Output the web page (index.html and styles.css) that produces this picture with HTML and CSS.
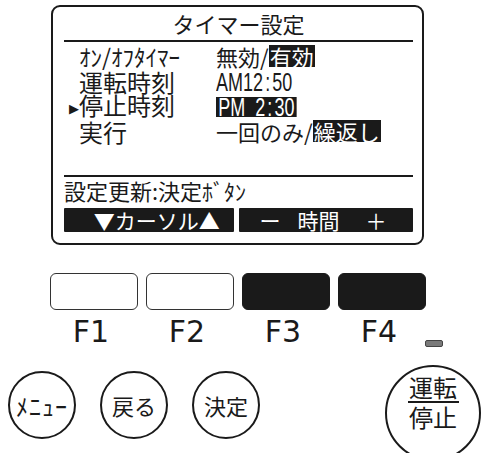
FILE: index.html
```html
<!DOCTYPE html>
<html lang="ja">
<head>
    <meta charset="UTF-8">
    <title>タイマー設定</title>
    <link rel="stylesheet" href="styles.css">
</head>
<body>

    <!-- LCD screen -->
    <div class="screen">
        <div class="title">タイマー設定</div>
        <div class="rows">
            <div class="label kana">ｵﾝ/ｵﾌﾀｲﾏｰ</div>
            <div class="value">無効/<span class="inv">有効</span></div>

            <div class="label">運転時刻</div>
            <div class="value"><span class="num">AM12<span class="colon">:</span>50</span></div>

            <div class="label"><span class="cursor">▶</span>停止時刻</div>
            <div class="value"><span class="num inv">PM&nbsp;&nbsp;2<span class="colon">:</span>30</span></div>

            <div class="label">実行</div>
            <div class="value">一回のみ/<span class="inv">繰返し</span></div>
        </div>
        <div class="hint">設定更新:決定ﾎﾞﾀﾝ</div>
        <div class="softkeys">
            <div class="softkey cursor-key">▼カーソル▲</div>
            <div class="softkey split">
                <span>ー</span>
                <span class="mid">時間</span>
                <span>＋</span>
            </div>
        </div>
    </div>

    <!-- function keys -->
    <div class="fkeys">
        <div class="fkey"></div>
        <div class="fkey"></div>
        <div class="fkey dark"></div>
        <div class="fkey dark"></div>
    </div>
    <div class="flabels">
        <div class="flabel">F1</div>
        <div class="flabel">F2</div>
        <div class="flabel">F3</div>
        <div class="flabel">F4</div>
        <div class="led"></div>
    </div>

    <!-- round buttons -->
    <div class="controls">
        <div class="round kana">ﾒﾆｭｰ</div>
        <div class="round">戻る</div>
        <div class="round">決定</div>
        <div class="power">
            <span>運転</span>
            <span class="bar"></span>
            <span>停止</span>
        </div>
    </div>

</body>
</html>
```

FILE: styles.css
```css
body {
    margin: 0;
    width: 482px;
    height: 453px;
    overflow: hidden;
    background: #fff;
    color: #1a1a1a;
    font-family: "Noto Sans CJK JP", sans-serif;
}

/* LCD screen */
.screen {
    box-sizing: border-box;
    width: 373px;
    height: 240px;
    margin: 5px 0 0 51px;
    padding: 0 9px 11px 11px;
    border: 2px solid #1a1a1a;
    border-radius: 9px;
    display: flex;
    flex-direction: column;
}

.title {
    height: 33px;
    line-height: 33px;
    font-size: 22px;
    text-align: center;
    border-bottom: 2.5px solid #1a1a1a;
}

.rows {
    display: grid;
    grid-template-columns: 137px 1fr;
    grid-auto-rows: 25px;
    align-items: center;
    margin-top: 1.5px;
    padding-left: 15px;
    line-height: 25px;
}

.label,
.value {
    white-space: nowrap;
}

.label {
    font-size: 24px;
}

.value {
    font-size: 22px;
}

.label.kana {
    font-size: 23px;
}

.cursor {
    display: inline-block;
    width: 10px;
    margin-left: -10px;
    font-family: "DejaVu Sans", sans-serif;
    font-size: 13px;
    vertical-align: 2px;
}

.inv {
    display: inline-block;
    background: #1a1a1a;
    color: #fff;
    line-height: 22px;
    padding: 0 1px;
}

/* condensed digits of the LCD */
.num {
    display: inline-block;
    font-family: "Liberation Sans", sans-serif;
    font-size: 25px;
    line-height: 20px;
    transform: scaleX(0.72);
    transform-origin: left center;
}

.num.inv {
    padding: 0 3px;
}

.colon {
    margin: 0 3px;
}

.hint {
    margin-top: auto;
    margin-bottom: 5px;
    border-top: 2px solid #1a1a1a;
    font-size: 22px;
    line-height: 26px;
    white-space: nowrap;
}

.softkeys {
    display: flex;
    gap: 5px;
    height: 24px;
}

.softkey {
    flex: 1;
    background: #1a1a1a;
    color: #fff;
    font-size: 21px;
    line-height: 24px;
    text-align: center;
    border-radius: 1px;
}

.softkey.cursor-key {
    padding-left: 16px;
}

.softkey.split {
    display: flex;
    padding-left: 21px;
}

.softkey .mid {
    margin: 0 26px 0 17px;
}

/* function keys */
.fkeys {
    display: flex;
    gap: 8px;
    margin: 28px 0 0 50px;
}

.fkey {
    box-sizing: border-box;
    width: 88px;
    height: 37px;
    border: 1.5px solid #333;
    border-radius: 6px;
}

.fkey.dark {
    background: #1a1a1a;
    border-color: #1a1a1a;
}

.flabels {
    display: flex;
    margin: 4px 0 0 51px;
    height: 36px;
}

.flabel {
    width: 80px;
    margin-right: 16px;
    text-align: center;
    font-family: "DejaVu Sans", sans-serif;
    font-size: 30px;
    line-height: 36px;
}

.flabel:nth-child(4) {
    margin-right: 6px;
}

.led {
    box-sizing: border-box;
    width: 18px;
    height: 7px;
    margin-top: 26px;
    background: #7a7a7a;
    border: 1px solid #444;
    border-radius: 2px;
}

/* round buttons */
.controls {
    display: flex;
    align-items: flex-start;
    gap: 24px;
    margin-top: 15px;
    padding-left: 8px;
}

.round {
    box-sizing: border-box;
    width: 68px;
    height: 68px;
    margin-top: 6px;
    border: 2px solid #1a1a1a;
    border-radius: 50%;
    display: flex;
    align-items: center;
    justify-content: center;
    font-size: 22px;
}

.round.kana {
    font-size: 24px;
    letter-spacing: 1px;
}

.power {
    box-sizing: border-box;
    flex: none;
    width: 96px;
    height: 96px;
    margin-left: auto;
    margin-right: 1px;
    padding-bottom: 22px;
    border: 2px solid #1a1a1a;
    border-radius: 50%;
    display: flex;
    flex-direction: column;
    align-items: center;
    justify-content: center;
    font-size: 24px;
    line-height: 24px;
}

.power .bar {
    width: 51px;
    height: 2px;
    margin: 2px 0;
    background: #1a1a1a;
}
```
